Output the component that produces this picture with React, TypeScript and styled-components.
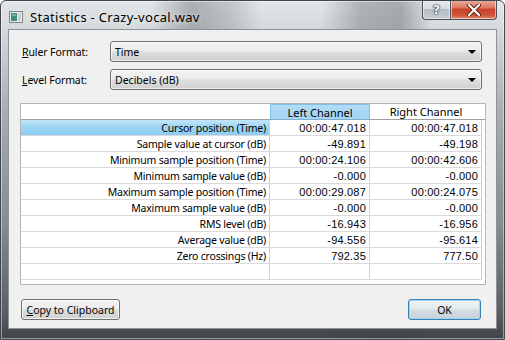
import React from "react";
import styled, { createGlobalStyle, css } from "styled-components";

const Global = createGlobalStyle`
  html, body { margin: 0; padding: 0; background: #ffffff; }
  body { font-family: "Noto Sans", "Open Sans", sans-serif; font-size: 11px; color: #000; }
  * { box-sizing: border-box; }
`;

const Window = styled.div`
  width: 505px;
  height: 340px;
  display: flex;
  flex-direction: column;
  padding: 0 7px 10px 7px;
  border: 1px solid #41474c;
  border-radius: 6px 6px 0 0;
  box-shadow: inset 0 0 0 1px rgba(255, 255, 255, 0.45);
  background:
    linear-gradient(to right,
      rgba(0,0,0,0) 0px, rgba(0,0,0,0) 150px, rgba(70,75,80,0.35) 190px, rgba(70,75,80,0.2) 230px,
      rgba(0,0,0,0) 260px, rgba(0,0,0,0) 320px, rgba(60,65,70,0.3) 360px, rgba(60,65,70,0.35) 400px,
      rgba(0,0,0,0) 430px),
    linear-gradient(to bottom, #e2e6e8 0px, #d4d9dc 28px, #a7adb2 110px, #868d92 220px, #5a6065 310px, #3d4247 340px);
  overflow: hidden;
`;

const TitleBar = styled.div`
  height: 28px;
  display: flex;
  align-items: flex-start;
  flex-shrink: 0;
`;

const TitleLeft = styled.div`
  display: flex;
  align-items: center;
  gap: 7px;
  padding: 7px 0 0 1px;
  flex: 1;
`;

const Title = styled.span`
  font-family: "Noto Sans", "Open Sans", sans-serif;
  font-size: 13px;
  letter-spacing: 0.3px;
  color: #000;
  text-shadow: 0 0 6px rgba(255, 255, 255, 0.9);
`;

const CaptionButtons = styled.div`
  display: flex;
  margin-top: -1px;
`;

const CaptionButton = styled.div<{ $kind: "help" | "close" }>`
  height: 20px;
  display: flex;
  align-items: center;
  justify-content: center;
  border: 1px solid #4a5056;
  border-top: none;
  box-shadow: inset 0 0 0 1px rgba(255, 255, 255, 0.55);
  ${(p) =>
    p.$kind === "help"
      ? css`
          width: 28px;
          border-right: none;
          border-radius: 0 0 0 4px;
          background: linear-gradient(to bottom, #e9ecee 0%, #d6dbdf 45%, #b5bcc2 50%, #c7ced3 100%);
        `
      : css`
          width: 47px;
          border-radius: 0 0 4px 0;
          background: linear-gradient(to bottom, #eab0a0 0%, #dc7a60 40%, #c7432a 50%, #d0553a 80%, #e08a6d 100%);
        `}
`;

const HelpGlyph = styled.span`
  font-family: "DejaVu Sans", sans-serif;
  font-weight: bold;
  font-size: 13px;
  color: #f4f6f7;
  text-shadow: 0 0 1px #2d3236, 0 0 1px #2d3236, 0 0 2px #2d3236;
  line-height: 1;
`;

const Client = styled.div`
  flex: 1;
  display: flex;
  flex-direction: column;
  background: #f0f0f0;
  border: 1px solid #8b9298;
  padding: 11px 0 8px 0;
`;

const FormRow = styled.div`
  display: flex;
  align-items: center;
  height: 21px;
  padding: 0 14px 0 13px;
  & + & { margin-top: 7px; }
`;

const FieldLabel = styled.span`
  width: 88px;
  flex-shrink: 0;
  font-size: 10.5px;
  letter-spacing: -0.1px;
`;

const Combo = styled.div`
  flex: 1;
  height: 21px;
  display: flex;
  align-items: center;
  justify-content: space-between;
  padding: 0 5px 0 4px;
  border: 1px solid #707070;
  border-radius: 3px;
  background: linear-gradient(to bottom, #f3f3f3 0%, #ebebeb 48%, #dedede 52%, #d0d0d0 100%);
  box-shadow: inset 0 0 0 1px rgba(255, 255, 255, 0.6);
  font-size: 10.5px;
`;

const Arrow = styled.span`
  width: 0;
  height: 0;
  border-left: 4px solid transparent;
  border-right: 4px solid transparent;
  border-top: 4px solid #000;
`;

const Grid = styled.div`
  margin: 13px 10px 0 11px;
  height: 182px;
  border: 1px solid #b2b6ba;
  background: #fff;
  display: grid;
  grid-template-columns: 249px 100px 112px 1fr;
  grid-auto-rows: 16px;
  align-content: start;
`;

const HeaderCell = styled.div<{ $active?: boolean }>`
  display: flex;
  align-items: center;
  justify-content: center;
  border-bottom: 1px solid #a0a0a0;
  font-size: 11px;
  ${(p) =>
    p.$active &&
    css`
      background: linear-gradient(to bottom, #b2dcf6, #a3d3f2);
      border: 1px solid #82bfe6;
      border-bottom-color: #7fb0d0;
    `}
`;

const Cell = styled.div<{ $selected?: boolean; $mono?: boolean; $filler?: boolean }>`
  display: flex;
  align-items: center;
  justify-content: flex-end;
  padding-right: 3px;
  font-size: 10.5px;
  letter-spacing: -0.2px;
  white-space: nowrap;
  border-bottom: ${(p) => (p.$filler ? "none" : "1px solid #dadada")};
  border-right: ${(p) => (p.$filler ? "none" : "1px solid #d2d2d2")};
  ${(p) =>
    p.$mono &&
    css`
      font-family: "Liberation Sans", sans-serif;
      font-size: 11px;
      letter-spacing: 0.2px;
    `}
  ${(p) =>
    p.$selected &&
    css`
      background: linear-gradient(to bottom, #c2e5f9 0%, #9fd6f5 45%, #8ccdf2 100%);
    `}
`;

const ButtonBar = styled.div`
  margin-top: 14px;
  display: flex;
  justify-content: space-between;
  padding: 0 15px 0 12px;
`;

const Button = styled.div<{ $default?: boolean; $w: number }>`
  width: ${(p) => p.$w}px;
  height: 21px;
  display: flex;
  align-items: center;
  justify-content: center;
  border-radius: 3px;
  font-size: 10.5px;
  border: 1px solid ${(p) => (p.$default ? "#3c7fb1" : "#707070")};
  box-shadow: inset 0 0 0 1px ${(p) => (p.$default ? "#9cd8f6" : "rgba(255,255,255,0.7)")};
  background: ${(p) =>
    p.$default
      ? "linear-gradient(to bottom, #eef3f6 0%, #e3eaee 48%, #d3dde3 52%, #c6d2d9 100%)"
      : "linear-gradient(to bottom, #f3f3f3 0%, #ebebeb 48%, #dedede 52%, #d0d0d0 100%)"};
`;

const AppIcon = () => (
  <svg width="14" height="12" viewBox="0 0 14 12">
    <rect x="0.5" y="0.5" width="13" height="11" fill="#e9ecec" stroke="#7d8587" />
    <rect x="2" y="2" width="6" height="8" fill="#3f8f7a" />
    <rect x="3" y="3" width="4" height="2" fill="#6fb7a0" />
    <rect x="9" y="2" width="3" height="8" fill="#c9cfd0" />
  </svg>
);

const CloseGlyph = () => (
  <svg width="14" height="12" viewBox="0 0 14 12">
    <path d="M2 1 L12 11 M12 1 L2 11" stroke="#5a1b10" strokeWidth="4" strokeLinecap="round" />
    <path d="M2 1 L12 11 M12 1 L2 11" stroke="#ffffff" strokeWidth="2.2" strokeLinecap="round" />
  </svg>
);

type Row = { label: string; left: string; right: string };

const rows: Row[] = [
  { label: "Cursor position (Time)", left: "00:00:47.018", right: "00:00:47.018" },
  { label: "Sample value at cursor (dB)", left: "-49.891", right: "-49.198" },
  { label: "Minimum sample position (Time)", left: "00:00:24.106", right: "00:00:42.606" },
  { label: "Minimum sample value (dB)", left: "-0.000", right: "-0.000" },
  { label: "Maximum sample position (Time)", left: "00:00:29.087", right: "00:00:24.075" },
  { label: "Maximum sample value (dB)", left: "-0.000", right: "-0.000" },
  { label: "RMS level (dB)", left: "-16.943", right: "-16.956" },
  { label: "Average value (dB)", left: "-94.556", right: "-95.614" },
  { label: "Zero crossings (Hz)", left: "792.35", right: "777.50" },
  { label: "", left: "", right: "" },
];

export default function App() {
  return (
    <>
      <Global />
      <Window>
        <TitleBar>
          <TitleLeft>
            <AppIcon />
            <Title>Statistics - Crazy-vocal.wav</Title>
          </TitleLeft>
          <CaptionButtons>
            <CaptionButton $kind="help">
              <HelpGlyph>?</HelpGlyph>
            </CaptionButton>
            <CaptionButton $kind="close">
              <CloseGlyph />
            </CaptionButton>
          </CaptionButtons>
        </TitleBar>
        <Client>
          <FormRow>
            <FieldLabel>
              <u>R</u>uler Format:
            </FieldLabel>
            <Combo>
              <span>Time</span>
              <Arrow />
            </Combo>
          </FormRow>
          <FormRow>
            <FieldLabel>
              <u>L</u>evel Format:
            </FieldLabel>
            <Combo>
              <span>Decibels (dB)</span>
              <Arrow />
            </Combo>
          </FormRow>
          <Grid>
            <HeaderCell />
            <HeaderCell $active>Left Channel</HeaderCell>
            <HeaderCell>Right Channel</HeaderCell>
            <HeaderCell />
            {rows.map((r, i) => (
              <React.Fragment key={i}>
                <Cell $selected={i === 0}>{r.label}</Cell>
                <Cell $mono>{r.left}</Cell>
                <Cell $mono>{r.right}</Cell>
                <Cell $filler />
              </React.Fragment>
            ))}
          </Grid>
          <ButtonBar>
            <Button $w={99}>
              <span>
                <u>C</u>opy to Clipboard
              </span>
            </Button>
            <Button $w={73} $default>
              OK
            </Button>
          </ButtonBar>
        </Client>
      </Window>
    </>
  );
}
